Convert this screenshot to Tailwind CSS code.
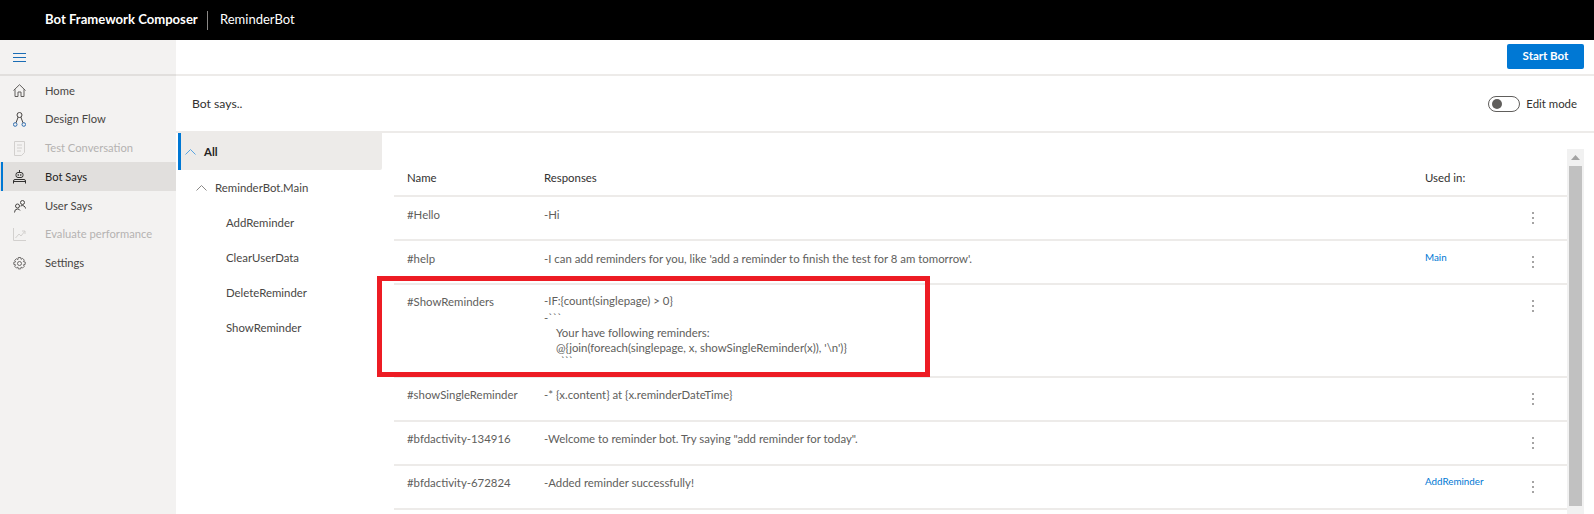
<!DOCTYPE html>
<html lang="en">
  <head>
    <meta charset="UTF-8" />
    <title>Bot Framework Composer</title>
    <script src="https://cdn.jsdelivr.net/npm/@tailwindcss/browser@4"></script>
  </head>
  <body class="h-[514px] w-[1594px] overflow-hidden bg-white font-['Lato',sans-serif] text-[11.4px] text-[#605e5c]">
    <!-- top bar -->
    <header class="flex h-10 items-center bg-black pl-[45px] text-white">
      <span class="w-[151px] whitespace-nowrap text-[13.1px] font-bold">Bot Framework Composer</span>
      <span class="ml-[11px] h-[19px] w-px bg-[#8a8886]"></span>
      <span class="ml-3 text-[13px]">ReminderBot</span>
    </header>

    <div class="relative flex h-[474px]">
      <!-- sidebar -->
      <nav class="w-[176px] shrink-0 bg-[#f3f2f1]">
        <div class="flex h-9 items-center border-b-2 border-[#e1dfdd] pl-[13px]">
          <svg class="h-[9px] w-[13px]" viewBox="0 0 13 9" fill="none" stroke="#1a6db5"><path d="M0 .5h13M0 4.500h13M0 8.500h13" /></svg>
        </div>
        <ul class="text-[11.2px]">
          <li class="flex h-[28.800px] items-center pl-[13px] pt-px text-[#484644]">
            <svg class="mr-[19px] h-[13px] w-[13px]" viewBox="0 0 13 13" fill="none" stroke="#605e5c"><path d="M.5 6.500 6.500.7l6 5.800M2 5.300v7.200h3V8h3v4.500h3V5.300" /></svg>
            Home
          </li>
          <li class="flex h-[28.800px] items-center pl-[13px] pt-px text-[#484644]">
            <svg class="mr-[19px] h-[15px] w-[13px]" viewBox="0 0 13 15" fill="none" stroke="#484644"><circle cx="6.500" cy="3" r="2.500" /><circle cx="2.200" cy="12.500" r="1.800" stroke="#2b6cb0" /><circle cx="10.800" cy="12.500" r="1.800" stroke="#2b6cb0" /><path d="M5.200 5 3 10.800M7.800 5 10 10.800" /></svg>
            Design Flow
          </li>
          <li class="flex h-[28.800px] items-center pl-[14px] pt-px text-[#b5b3b1]">
            <svg class="mr-[19px] h-[15px] w-[12px]" viewBox="0 0 12 15" fill="none" stroke="#d2d0ce"><path d="M.5.500h10v11l-3 3h-7zM3 4h5M3 7h5M3 10h4" /></svg>
            Test Conversation
          </li>
          <li class="relative flex h-[28.800px] items-center bg-[#e1dfdd] pl-[13px] pt-px text-[#252423] before:absolute before:left-px before:top-0 before:h-full before:w-[2px] before:bg-[#0078d4]">
            <svg class="mr-[19px] h-[14px] w-[13px]" viewBox="0 0 13 14" fill="none" stroke="#323130"><path d="M6.500 0v2" /><rect x="3" y="2.500" width="7" height="5" rx="2" /><path d="M.5 13.500V11q0-1.500 1.500-1.500h9q1.500 0 1.500 1.500v2.500M.5 11.500h12" /><circle cx="5.200" cy="5" r=".4" /><circle cx="7.800" cy="5" r=".4" /></svg>
            Bot Says
          </li>
          <li class="flex h-[28.800px] items-center pl-[14px] pt-px text-[#484644]">
            <svg class="mr-[19px] h-[13px] w-[12px]" viewBox="0 0 12 13" fill="none" stroke="#484644"><circle cx="3.500" cy="6" r="2" /><circle cx="8.500" cy="2.500" r="2" /><path d="M.5 12.500q0-3.500 3-3.500 2 0 2.500 1.500M6.500 6q2-1 3.500 0t1.500 2.500" /></svg>
            User Says
          </li>
          <li class="flex h-[28.800px] items-center pl-[13px] pt-px text-[#b5b3b1]">
            <svg class="mr-[19px] h-[13px] w-[13px]" viewBox="0 0 13 13" fill="none" stroke="#d2d0ce"><path d="M.5 0v12.500H13M2.500 10 6 6l2 2 4-5M9 3h3v3" /></svg>
            Evaluate performance
          </li>
          <li class="flex h-[28.800px] items-center pl-[13px] pt-px text-[#484644]">
            <svg class="mr-[19px] h-[13px] w-[13px]" viewBox="0 0 13 13" fill="none" stroke="#605e5c" stroke-width=".9"><circle cx="6.500" cy="6.500" r="2" /><path d="M5.300.5h2.400l.4 1.800 1.500-.9 1.700 1.700-.9 1.500 1.800.4v2.400l-1.800.4.900 1.500-1.700 1.700-1.500-.9-.4 1.800H5.300l-.4-1.800-1.500.9-1.700-1.700.9-1.500-1.800-.4V5.300l1.800-.4-.9-1.500 1.700-1.700 1.500.9z" /></svg>
            Settings
          </li>
        </ul>
      </nav>

      <main class="min-w-0 flex-1">
        <div class="flex h-9 items-center justify-end border-b-2 border-[#edebe9] pr-[10px]">
          <button class="mt-[-2px] h-[25px] w-[77px] rounded-[2px] bg-[#0078d4] text-[11.500px] font-bold text-white">Start Bot</button>
        </div>
        <div class="flex h-[57px] items-center justify-between border-b-2 border-[#edebe9] pl-4 pr-[17px] pt-px">
          <h1 class="text-[12.200px] text-[#323130]">Bot says..</h1>
          <div class="flex items-center gap-[6px]">
            <span class="flex h-[16px] w-[32px] items-center rounded-full border border-[#605e5c] pl-[3px]"><span class="h-[10px] w-[10px] rounded-full bg-[#605e5c]"></span></span>
            <span class="text-[#323130]">Edit mode</span>
          </div>
        </div>

        <div class="flex">
          <!-- dialog tree -->
          <aside class="ml-[2px] w-[204px] shrink-0 text-[#484644]">
            <div class="flex h-[37px] items-center rounded-br-[2px] border-l-[3px] border-[#0078d4] bg-[#edebe9] pl-[4px] text-[#252423]">
              <svg class="mr-[8px] h-[6px] w-[11px]" viewBox="0 0 11 6" fill="none" stroke="#5aa5e0"><path d="m.5 5.500 5-5 5 5" /></svg>
              <span class="font-bold">All</span>
            </div>
            <div class="flex h-[35px] items-center pl-[18px]">
              <svg class="mr-[8px] h-[6px] w-[11px]" viewBox="0 0 11 6" fill="none" stroke="#8a8886"><path d="m.5 5.500 5-5 5 5" /></svg>
              ReminderBot.Main
            </div>
            <div class="flex h-[35px] items-center pl-[48px]">AddReminder</div>
            <div class="flex h-[35px] items-center pl-[48px]">ClearUserData</div>
            <div class="flex h-[35px] items-center pl-[48px]">DeleteReminder</div>
            <div class="flex h-[35px] items-center pl-[48px]">ShowReminder</div>
          </aside>

          <!-- table -->
          <section class="ml-3 w-[1173px] pt-[17px]">
            <div class="grid h-[47px] grid-cols-[137px_881px_1fr] items-center border-b-2 border-[#edebe9] pl-[13px] pt-[10px] text-[#323130]">
              <span>Name</span><span>Responses</span><span>Used in:</span>
            </div>
            <div class="grid h-[44px] grid-cols-[137px_881px_107px_1fr] border-b-2 border-[#edebe9] pl-[13px] pt-[9px]">
              <span>#Hello</span><span>-Hi</span><span></span>
              <svg class="mt-[6px] h-[12px] w-[2px]" viewBox="0 0 2 12" fill="#323130"><circle cx="1" cy="1" r=".8" /><circle cx="1" cy="6" r=".8" /><circle cx="1" cy="11" r=".8" /></svg>
            </div>
            <div class="grid h-[44px] grid-cols-[137px_881px_107px_1fr] border-b-2 border-[#edebe9] pl-[13px] pt-[9px]">
              <span>#help</span><span>-I can add reminders for you, like 'add a reminder to finish the test for 8 am tomorrow'.</span><span class="text-[9.800px] text-[#0078d4]">Main</span>
              <svg class="mt-[6px] h-[12px] w-[2px]" viewBox="0 0 2 12" fill="#323130"><circle cx="1" cy="1" r=".8" /><circle cx="1" cy="6" r=".8" /><circle cx="1" cy="11" r=".8" /></svg>
            </div>
            <div class="grid h-[93px] grid-cols-[137px_881px_107px_1fr] border-b-2 border-[#edebe9] pl-[13px] pt-2">
              <span>#ShowReminders</span>
              <div class="leading-[15px]">
                <p>-IF:{count(singlepage) &gt; 0}</p>
                <p class="mt-[1.500px]">-```</p>
                <p class="pl-3">Your have following reminders:</p>
                <p class="pl-3">@{join(foreach(singlepage, x, showSingleReminder(x)), '\n')}</p>
                <p class="mt-[-1px] pl-[17px] text-[10px] leading-[12px] text-[#484644]">```</p>
              </div>
              <span></span>
              <svg class="mt-[7px] h-[12px] w-[2px]" viewBox="0 0 2 12" fill="#323130"><circle cx="1" cy="1" r=".8" /><circle cx="1" cy="6" r=".8" /><circle cx="1" cy="11" r=".8" /></svg>
            </div>
            <div class="grid h-[44px] grid-cols-[137px_881px_107px_1fr] border-b-2 border-[#edebe9] pl-[13px] pt-2">
              <span>#showSingleReminder</span><span>-* {x.content} at {x.reminderDateTime}</span><span></span>
              <svg class="mt-[7px] h-[12px] w-[2px]" viewBox="0 0 2 12" fill="#323130"><circle cx="1" cy="1" r=".8" /><circle cx="1" cy="6" r=".8" /><circle cx="1" cy="11" r=".8" /></svg>
            </div>
            <div class="grid h-[44px] grid-cols-[137px_881px_107px_1fr] border-b-2 border-[#edebe9] pl-[13px] pt-2">
              <span>#bfdactivity-134916</span><span>-Welcome to reminder bot. Try saying "add reminder for today".</span><span></span>
              <svg class="mt-[7px] h-[12px] w-[2px]" viewBox="0 0 2 12" fill="#323130"><circle cx="1" cy="1" r=".8" /><circle cx="1" cy="6" r=".8" /><circle cx="1" cy="11" r=".8" /></svg>
            </div>
            <div class="grid h-[44px] grid-cols-[137px_881px_107px_1fr] border-b-2 border-[#edebe9] pl-[13px] pt-2">
              <span>#bfdactivity-672824</span><span>-Added reminder successfully!</span><span class="text-[9.800px] text-[#0078d4]">AddReminder</span>
              <svg class="mt-[7px] h-[12px] w-[2px]" viewBox="0 0 2 12" fill="#323130"><circle cx="1" cy="1" r=".8" /><circle cx="1" cy="6" r=".8" /><circle cx="1" cy="11" r=".8" /></svg>
            </div>
          </section>
        </div>
      </main>

      <!-- scrollbar -->
      <div class="absolute left-[1567px] top-[109px] h-[365px] w-[17px] bg-[#f1f1f1] px-[2px]">
        <svg class="mx-auto mt-[6px] h-[5px] w-[9px]" viewBox="0 0 9 5"><path d="M4.500 0 9 5H0z" fill="#a3a3a3" /></svg>
        <div class="mt-[6px] h-[340px] bg-[#c1c1c1]"></div>
      </div>

      <!-- red annotation box -->
      <div class="pointer-events-none absolute left-[377px] top-[236px] h-[101px] w-[553px] border-[5px] border-[#ed1c24]"></div>
    </div>
  </body>
</html>
